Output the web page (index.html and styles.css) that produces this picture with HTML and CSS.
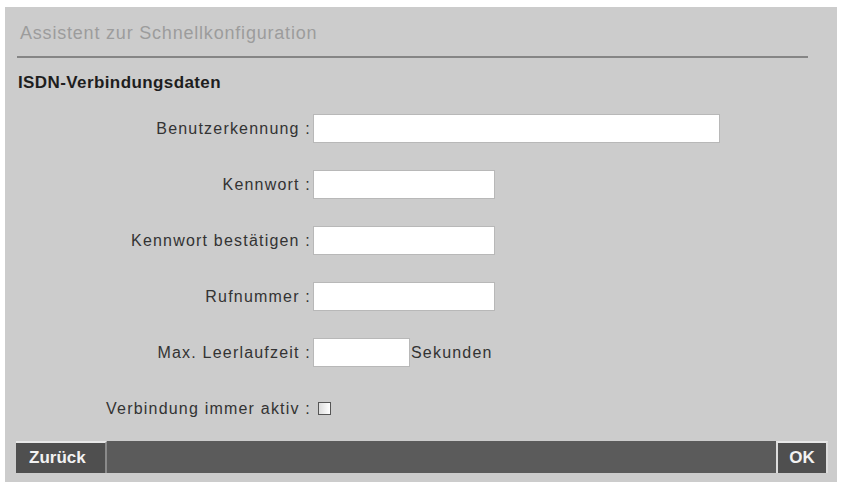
FILE: index.html
```html
<!DOCTYPE html>
<html lang="de">
<head>
    <meta charset="UTF-8">
    <title>Assistent zur Schnellkonfiguration</title>
    <link rel="stylesheet" href="styles.css">
</head>
<body>
    <div class="panel">
        <div class="title">Assistent zur Schnellkonfiguration</div>
        <div class="rule"></div>
        <h3 class="section">ISDN-Verbindungsdaten</h3>
        <form class="form">
            <div class="row">
                <label for="user">Benutzerkennung :</label>
                <input type="text" id="user" class="field wide">
            </div>
            <div class="row">
                <label for="pass">Kennwort :</label>
                <input type="password" id="pass" class="field">
            </div>
            <div class="row">
                <label for="pass2">Kennwort bestätigen :</label>
                <input type="password" id="pass2" class="field">
            </div>
            <div class="row">
                <label for="number">Rufnummer :</label>
                <input type="text" id="number" class="field">
            </div>
            <div class="row">
                <label for="idle">Max. Leerlaufzeit :</label>
                <input type="text" id="idle" class="field short">
                <span class="unit">Sekunden</span>
            </div>
            <div class="row check-row">
                <label for="always">Verbindung immer aktiv :</label>
                <input type="checkbox" id="always" class="check">
            </div>
        </form>
        <div class="footer">
            <button class="nav-button">Zurück</button>
            <button class="nav-button ok">OK</button>
        </div>
    </div>
</body>
</html>
```

FILE: styles.css
```css
body {
    margin: 0;
    background: #ffffff;
    font-family: 'Liberation Sans', Arial, sans-serif;
}
.panel {
    margin: 7px 5px 0 5px;
    height: 475px;
    background: #cccccc;
    box-sizing: border-box;
    padding-top: 1px;
}
.title {
    color: #9c9c9c;
    font-size: 18px;
    letter-spacing: 0.8px;
    padding: 15px 0 0 15px;
    height: 33px;
    box-sizing: content-box;
}
.rule {
    height: 2px;
    background: #858585;
    margin: 0 29px 0 12px;
}
.section {
    margin: 15px 0 0 13px;
    font-size: 17px;
    font-weight: bold;
    letter-spacing: 0.4px;
    color: #1e1e1e;
}
.form {
    margin-top: 21px;
}
.row {
    display: flex;
    align-items: center;
    height: 29px;
    margin-bottom: 27px;
}
.row label {
    width: 306px;
    text-align: right;
    font-size: 16px;
    color: #333333;
    letter-spacing: 1.2px;
    padding-right: 2px;
}
.field {
    height: 29px;
    width: 182px;
    box-sizing: border-box;
    border: 1px solid #b8b8b8;
    background: #ffffff;
    margin: 0;
    padding: 2px 4px;
}
.field.wide {
    width: 407px;
}
.field.short {
    width: 97px;
}
.unit {
    font-size: 16px;
    color: #333333;
    margin-left: 1px;
    letter-spacing: 1.2px;
}
.check-row {
    margin-bottom: 0;
}
.check {
    width: 13px;
    height: 13px;
    margin: 0 0 0 5px;
    appearance: none;
    border: 1px solid #555555;
    background: linear-gradient(90deg, #dddddd, #ffffff);
}
.footer {
    display: flex;
    justify-content: space-between;
    height: 32px;
    margin: 18px 9px 0 11px;
    background: #5b5b5b;
}
.nav-button {
    background: #4f4f4f;
    color: #f2f2f2;
    border: none;
    border-top: 2px solid #e8e8e8;
    border-right: 2px solid #8a8a8a;
    font-family: 'Liberation Sans', Arial, sans-serif;
    font-size: 17px;
    font-weight: bold;
    padding: 0 8px 0 13px;
    width: 91px;
    text-align: left;
    cursor: pointer;
}
.nav-button.ok {
    width: 52px;
    text-align: center;
    border-right: 2px solid #dddddd;
    border-left: 2px solid #dddddd;
    padding: 0;
}
```
